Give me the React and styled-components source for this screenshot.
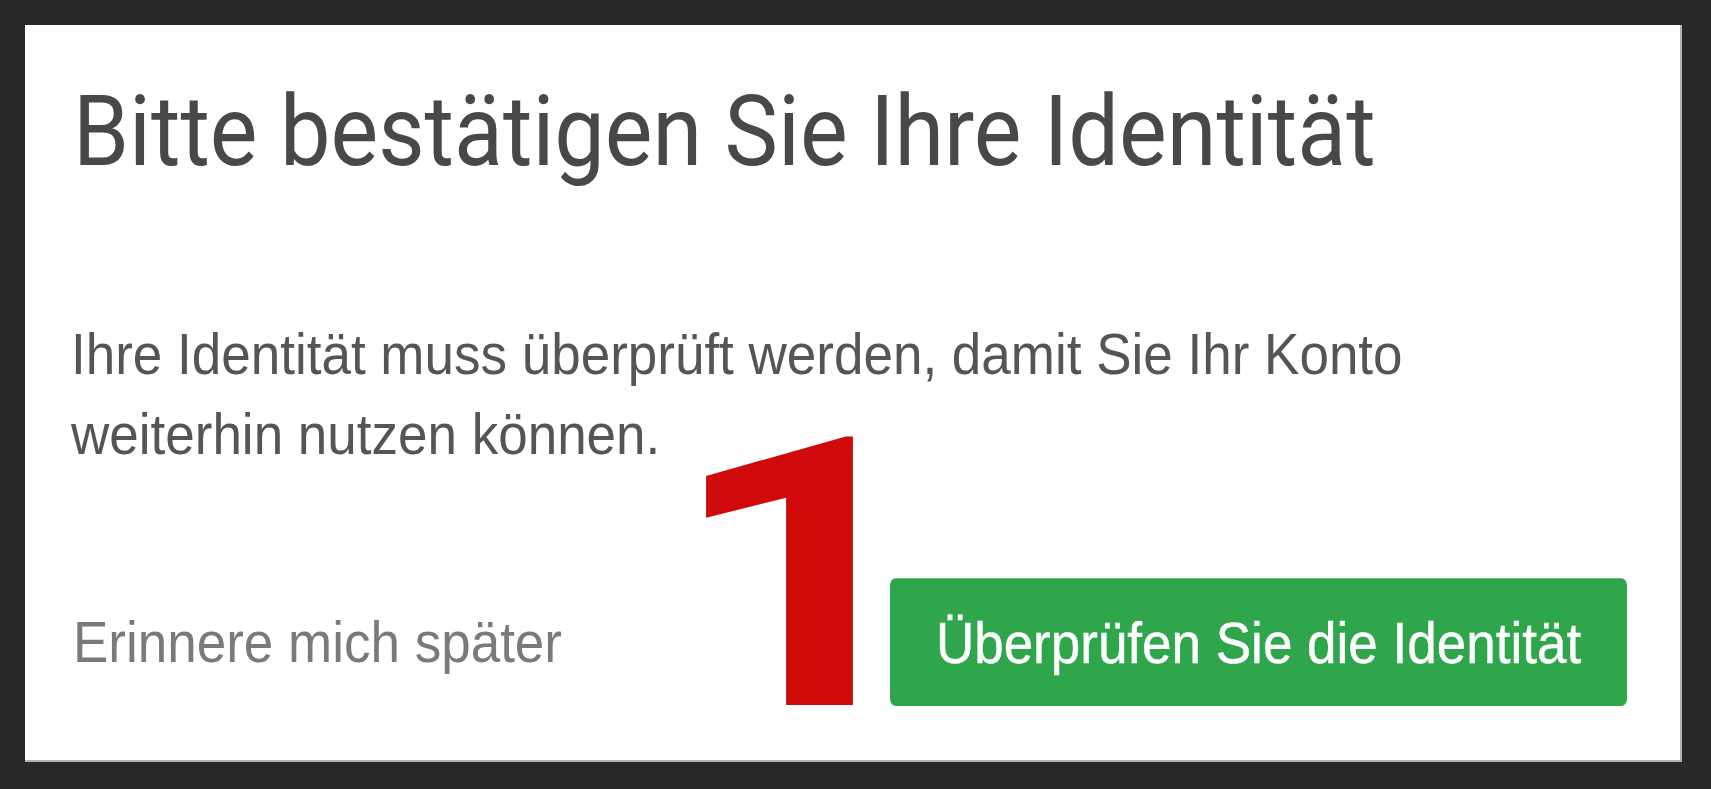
import React from "react";
import styled, { createGlobalStyle } from "styled-components";

const GlobalStyle = createGlobalStyle`
  html, body {
    margin: 0;
    padding: 0;
    background: #2b2927;
  }
  * {
    box-sizing: border-box;
  }
`;

const App = () => {
  return (
    <>
      <GlobalStyle />
      <Frame>
        <Card>
          {/* the screenshot under the marker is stretched a little in height */}
          <Content>
            <Title>Bitte bestätigen Sie Ihre Identität</Title>
            <Message>
              Ihre Identität muss überprüft werden, damit Sie Ihr Konto
              <br />
              weiterhin nutzen können.
            </Message>
            <Footer>
              <LaterLink>Erinnere mich später</LaterLink>
              <VerifyButton type="button">Überprüfen Sie die Identität</VerifyButton>
            </Footer>
          </Content>
          <StepMarker>1</StepMarker>
        </Card>
      </Frame>
    </>
  );
};

const Frame = styled.div`
  width: 1711px;
  height: 789px;
  padding: 25px 29px 27px 25px;
  background: #2b2927;
`;

const Card = styled.div`
  position: relative;
  width: 100%;
  height: 100%;
  background: #ffffff;
  box-shadow: inset -2px -2px 0 #b4b4b4;
`;

const Content = styled.div`
  display: flex;
  flex-direction: column;
  padding: 43px 55px 0 50px;
  transform: scaleY(1.1);
  transform-origin: top left;
`;

const Title = styled.h1`
  margin: 0 0 0 -2px;
  font-family: Roboto, "Liberation Sans", sans-serif;
  font-weight: 400;
  font-size: 90px;
  line-height: 108px;
  color: #484848;
  white-space: nowrap;
`;

const Message = styled.p`
  margin: 112px 0 0 -4px;
  font-family: "Liberation Sans", Arial, sans-serif;
  font-size: 53px;
  line-height: 72.7px;
  color: #555555;
  white-space: nowrap;
`;

const Footer = styled.div`
  display: flex;
  align-items: center;
  justify-content: space-between;
  margin-top: 95px;
`;

const LaterLink = styled.span`
  margin-left: -2px;
  font-family: "Liberation Sans", Arial, sans-serif;
  font-size: 53px;
  line-height: 60px;
  color: #7a7a7a;
  white-space: nowrap;
`;

const VerifyButton = styled.button`
  display: flex;
  align-items: center;
  justify-content: center;
  width: 737px;
  height: 116px;
  padding: 0;
  border: none;
  border-radius: 6px;
  background: #2fa64c;
  font-family: "Liberation Sans", Arial, sans-serif;
  font-size: 53px;
  color: #ffffff;
  -webkit-text-stroke: 0.4px #ffffff;
  white-space: nowrap;
`;

const StepMarker = styled.div`
  position: absolute;
  left: 642px;
  top: 325px;
  font-family: Roboto, "Liberation Sans", sans-serif;
  font-weight: 700;
  font-size: 377px;
  line-height: 452px;
  color: #d00a0a;
  transform: scaleX(1.26);
  transform-origin: left top;
`;

export default App;
